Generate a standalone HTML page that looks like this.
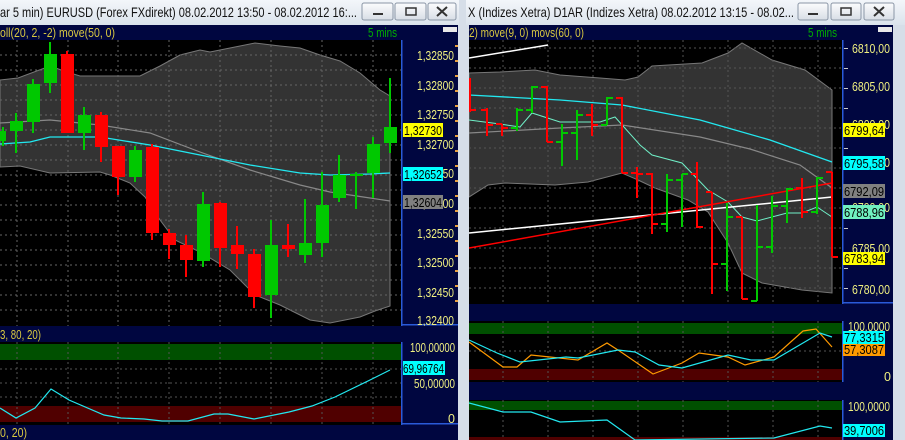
<!DOCTYPE html>
<html><head><meta charset="utf-8"><style>
html,body{margin:0;padding:0;background:#d6dee8;width:905px;height:440px;overflow:hidden}
svg{display:block}
text{font-family:"Liberation Sans",sans-serif}
</style></head><body>
<svg width="905" height="440" viewBox="0 0 905 440" xmlns="http://www.w3.org/2000/svg">
<defs>
<linearGradient id="tb" x1="0" y1="0" x2="0" y2="1"><stop offset="0" stop-color="#f3f6fa"/><stop offset="1" stop-color="#dbe3ec"/></linearGradient>
<linearGradient id="bt" x1="0" y1="0" x2="0" y2="1"><stop offset="0" stop-color="#fbfcfd"/><stop offset="1" stop-color="#d8dee6"/></linearGradient>
<clipPath id="cl"><rect x="0" y="40" width="401" height="286"/></clipPath>
<clipPath id="cr"><rect x="469" y="40" width="373" height="264"/></clipPath>
<clipPath id="il"><rect x="0" y="342" width="401" height="83"/></clipPath>
<clipPath id="ir1"><rect x="469" y="321" width="373" height="61"/></clipPath>
<clipPath id="ir2"><rect x="469" y="400" width="373" height="40"/></clipPath>
</defs>
<rect width="905" height="440" fill="#d6dee8"/>

<!-- ===== LEFT WINDOW ===== -->
<rect x="0" y="0" width="459" height="25" fill="url(#tb)"/>
<text x="0" y="17" font-size="14" fill="#111" textLength="357" lengthAdjust="spacingAndGlyphs">ar 5 min)  EURUSD (Forex FXdirekt) 08.02.2012 13:50 - 08.02.2012 16:...</text>
<rect x="362" y="3" width="31" height="17" rx="2" fill="url(#bt)" stroke="#8a96a6"/>
<rect x="395" y="3" width="31" height="17" rx="2" fill="url(#bt)" stroke="#8a96a6"/>
<rect x="428" y="3" width="28" height="17" rx="2" fill="url(#bt)" stroke="#8a96a6"/>
<rect x="373" y="13" width="10" height="2" fill="#333"/>
<rect x="406" y="8" width="10" height="7" fill="none" stroke="#333" stroke-width="1.5"/>
<path d="M437 7 L447 16 M447 7 L437 16" stroke="#333" stroke-width="2"/>
<rect x="0" y="25" width="458" height="15" fill="#000640"/>
<text x="0" y="37" font-size="12.5" fill="#d8c840" textLength="115" lengthAdjust="spacingAndGlyphs">oll(20, 2, -2) move(50, 0)</text>
<text x="368" y="37" font-size="12.5" fill="#00b000" textLength="29" lengthAdjust="spacingAndGlyphs">5 mins</text>
<rect x="443" y="27" width="14" height="5" fill="#e8e8e8"/>

<rect x="0" y="40" width="401" height="286" fill="#000"/>
<g clip-path="url(#cl)">
<polygon fill="#333" stroke="#777" stroke-width="1" points="0,80 18,78 50,66 67,72 80,76 140,76 160,66 180,55 200,50 210,52 230,48 255,43 280,46 300,48 320,55 340,61 360,73 380,90 390,96 390,306 375,311 360,317 330,323 310,320 280,305 255,295 230,270 200,252 175,240 160,220 145,197 130,183 110,175 100,172 50,173 20,166 0,167"/>
<g stroke="#666" stroke-width="1" stroke-dasharray="2,3">
<path d="M17 40V326M68 40V326M118 40V326M169 40V326M220 40V326M271 40V326M322 40V326M373 40V326"/>
<path d="M0 55H401M0 70H401M0 85H401M0 100H401M0 115H401M0 130H401M0 145H401M0 160H401M0 175H401M0 190H401M0 205H401M0 220H401M0 235H401M0 250H401M0 265H401M0 280H401M0 295H401M0 310H401"/>
</g>
<polyline fill="none" stroke="#888" stroke-width="1.2" points="0,123 50,120 100,125 150,133 200,152 250,170 300,185 330,192 370,198 390,201"/>
<polyline fill="none" stroke="#22e8f0" stroke-width="1.3" points="0,144 30,142 50,137 100,137 150,145 200,155 250,165 300,173 330,175 370,174 390,173"/>
<g stroke-width="2">
<path stroke="#00c800" d="M3 127V146M16 113V153M33 79V133M50 42V93M84 107V150M135 146V182M203 192V267M271 220V318M305 199V263M322 172V257M339 155V202M356 172V209M373 137V198M390 78V153"/>
<path stroke="#f00" d="M67 51V133M101 112V162M118 146V195M152 144V240M169 229V259M186 235V277M220 202V267M237 226V269M254 249V308M288 224V257"/>
</g>
<g fill="#00c800">
<rect x="-4" y="131" width="10" height="10"/><rect x="10" y="121" width="13" height="10"/><rect x="27" y="84" width="13" height="38"/><rect x="44" y="54" width="13" height="29"/><rect x="78" y="115" width="13" height="18"/><rect x="129" y="150" width="13" height="27"/><rect x="197" y="204" width="13" height="57"/><rect x="265" y="245" width="13" height="50"/><rect x="299" y="243" width="13" height="12"/><rect x="316" y="205" width="13" height="38"/><rect x="333" y="175" width="13" height="23"/><rect x="350" y="174" width="13" height="2"/><rect x="367" y="144" width="13" height="29"/><rect x="384" y="127" width="13" height="16"/>
</g>
<g fill="#f00">
<rect x="61" y="54" width="13" height="79"/><rect x="95" y="115" width="13" height="32"/><rect x="112" y="146" width="13" height="31"/><rect x="146" y="147" width="13" height="86"/><rect x="163" y="233" width="13" height="12"/><rect x="180" y="245" width="13" height="15"/><rect x="214" y="203" width="13" height="45"/><rect x="231" y="245" width="13" height="9"/><rect x="248" y="254" width="13" height="43"/><rect x="282" y="245" width="13" height="4"/>
</g>
</g>
<!-- left axis -->
<rect x="401" y="40" width="57" height="286" fill="#000640"/>
<rect x="401" y="40" width="1.5" height="286" fill="#2a5ad8"/>
<rect x="401" y="324" width="57" height="1.5" fill="#2a5ad8"/>
<g fill="#e8a040"><rect x="455" y="45" width="3" height="2"/><rect x="455" y="60" width="3" height="2"/><rect x="455" y="75" width="3" height="2"/><rect x="455" y="90" width="3" height="2"/><rect x="455" y="105" width="3" height="2"/><rect x="455" y="120" width="3" height="2"/><rect x="455" y="135" width="3" height="2"/><rect x="455" y="150" width="3" height="2"/><rect x="455" y="165" width="3" height="2"/><rect x="455" y="180" width="3" height="2"/><rect x="455" y="195" width="3" height="2"/><rect x="455" y="210" width="3" height="2"/><rect x="455" y="225" width="3" height="2"/><rect x="455" y="240" width="3" height="2"/><rect x="455" y="255" width="3" height="2"/><rect x="455" y="270" width="3" height="2"/><rect x="455" y="285" width="3" height="2"/><rect x="455" y="300" width="3" height="2"/></g>
<g font-size="12.5" fill="#f0f080">
<text x="417" y="60" textLength="37" lengthAdjust="spacingAndGlyphs">1,32850</text><text x="417" y="90" textLength="37" lengthAdjust="spacingAndGlyphs">1,32800</text><text x="417" y="119" textLength="37" lengthAdjust="spacingAndGlyphs">1,32750</text><text x="417" y="149" textLength="37" lengthAdjust="spacingAndGlyphs">1,32700</text><text x="417" y="178" textLength="37" lengthAdjust="spacingAndGlyphs">1,32650</text><text x="417" y="208" textLength="37" lengthAdjust="spacingAndGlyphs">1,32600</text><text x="417" y="238" textLength="37" lengthAdjust="spacingAndGlyphs">1,32550</text><text x="417" y="267" textLength="37" lengthAdjust="spacingAndGlyphs">1,32500</text><text x="417" y="297" textLength="37" lengthAdjust="spacingAndGlyphs">1,32450</text><text x="417" y="325" textLength="37" lengthAdjust="spacingAndGlyphs">1,32400</text>
</g>
<g font-size="12.5" fill="#000">
<rect x="403" y="123" width="40" height="14" fill="#ffff00"/><text x="404" y="135" textLength="38" lengthAdjust="spacingAndGlyphs">1,32730</text>
<rect x="403" y="167" width="40" height="14" fill="#00ffff"/><text x="404" y="179" textLength="38" lengthAdjust="spacingAndGlyphs">1,32652</text>
<rect x="403" y="195" width="40" height="14" fill="#808080"/><text x="404" y="207" textLength="38" lengthAdjust="spacingAndGlyphs">1,32604</text>
</g>

<rect x="0" y="326" width="458" height="16" fill="#000640"/>
<text x="0" y="339" font-size="12.5" fill="#d8c840" textLength="41" lengthAdjust="spacingAndGlyphs">3, 80, 20)</text>
<rect x="0" y="342" width="401" height="83" fill="#000"/>
<g clip-path="url(#il)">
<rect x="0" y="344" width="401" height="16" fill="#005000"/>
<rect x="0" y="406" width="401" height="16" fill="#500000"/>
<g stroke="#555" stroke-width="1" stroke-dasharray="2,3"><path d="M17 342V425M68 342V425M118 342V425M169 342V425M220 342V425M271 342V425M322 342V425M373 342V425M0 369H401M0 383H401M0 397H401"/></g>
<polyline fill="none" stroke="#22e8f0" stroke-width="1.2" points="0,408 16,418 35,408 51,389 69,400 104,415 121,418 144,419 162,421 188,421 214,414 228,414 254,419 289,412 312,406 335,397 370,380 390,370"/>
</g>
<rect x="401" y="342" width="57" height="83" fill="#000640"/>
<rect x="401" y="342" width="1.5" height="83" fill="#2a5ad8"/>
<rect x="401" y="423" width="57" height="1.5" fill="#2a5ad8"/>
<g font-size="12.5" fill="#f0f080"><text x="410" y="352" textLength="45" lengthAdjust="spacingAndGlyphs">100,00000</text><text x="414" y="388" textLength="41" lengthAdjust="spacingAndGlyphs">50,00000</text><text x="448" y="423">0</text></g>
<rect x="403" y="361" width="42" height="14" fill="#00ffff"/><text x="403" y="373" font-size="12.5" fill="#000" textLength="41" lengthAdjust="spacingAndGlyphs">69,96764</text>
<rect x="0" y="425" width="458" height="15" fill="#000640"/>
<text x="0" y="437" font-size="12.5" fill="#d8c840" textLength="27" lengthAdjust="spacingAndGlyphs">0, 20)</text>

<!-- ===== RIGHT WINDOW ===== -->
<rect x="466" y="0" width="439" height="25" fill="url(#tb)"/>
<text x="468" y="17" font-size="14" fill="#111" textLength="326" lengthAdjust="spacingAndGlyphs">X (Indizes Xetra) D1AR (Indizes Xetra) 08.02.2012 13:15 - 08.02...</text>
<rect x="798" y="3" width="30" height="17" rx="2" fill="url(#bt)" stroke="#8a96a6"/>
<rect x="831" y="3" width="30" height="17" rx="2" fill="url(#bt)" stroke="#8a96a6"/>
<rect x="864" y="3" width="30" height="17" rx="2" fill="url(#bt)" stroke="#8a96a6"/>
<rect x="808" y="13" width="10" height="2" fill="#333"/>
<rect x="841" y="8" width="10" height="7" fill="none" stroke="#333" stroke-width="1.5"/>
<path d="M874 7 L884 16 M884 7 L874 16" stroke="#333" stroke-width="2"/>
<rect x="469" y="25" width="424" height="15" fill="#000640"/>
<text x="469" y="37" font-size="12.5" fill="#d8c840" textLength="115" lengthAdjust="spacingAndGlyphs">2) move(9, 0) movs(60, 0)</text>
<text x="808" y="37" font-size="12.5" fill="#00b000" textLength="29" lengthAdjust="spacingAndGlyphs">5 mins</text>
<rect x="878" y="27" width="14" height="5" fill="#e8e8e8"/>

<rect x="469" y="40" width="373" height="264" fill="#000"/>
<g clip-path="url(#cr)">
<polygon fill="#333" stroke="#777" stroke-width="1" points="469,73 500,72 535,70 560,75 600,78 625,80 638,77 652,66 702,63 728,53 742,43 772,60 805,70 832,90 832,293 802,290 762,283 742,273 728,243 708,212 688,200 655,188 638,180 622,173 588,182 555,185 505,183 488,185 469,197"/>
<g stroke="#555" stroke-width="1" stroke-dasharray="2,3">
<path d="M503 40V304M548 40V304M593 40V304M638 40V304M683 40V304M728 40V304M773 40V304M818 40V304"/>
<path d="M469 48H842M469 68H842M469 88H842M469 108H842M469 128H842M469 148H842M469 168H842M469 188H842M469 208H842M469 228H842M469 248H842M469 268H842M469 288H842"/>
</g>
<polyline fill="none" stroke="#888" stroke-width="1.2" points="469,133 560,128 622,125 700,137 750,149 800,165 832,188"/>
<polyline fill="none" stroke="#22e8f0" stroke-width="1.3" points="469,95 560,100 622,105 700,120 770,140 832,162"/>
<polyline fill="none" stroke="#70f0c8" stroke-width="1" points="469,120 500,124 520,127 532,113 560,122 600,122 615,117 640,145 652,155 682,163 708,190 728,202 742,217 757,221 787,213 802,213 817,207 832,217"/>
<path d="M469 58 L548 45" stroke="#fff" stroke-width="1.5"/>
<path d="M469 233 L832 197" stroke="#fff" stroke-width="1.5"/>
<path d="M469 248 L832 183" stroke="#f00" stroke-width="1.5"/>
<g stroke-width="2" fill="none">
<path stroke="#f00" d="M470 78V112M470 110H476 M487 108V136M481 110H487M487 125H493 M502 124V136M496 124H502M502 128H508 M547 86V142M541 87H547M547 142H553 M592 104V136M586 115H592M592 125H598 M622 97V173M616 98H622M622 173H628 M637 167V198M631 173H637M637 174H643 M652 173V234M646 174H652M652 224H658 M697 162V228M691 174H697M697 227H703 M712 192V294M706 192H712M712 264H718 M742 217V299M736 217H742M742 299H748 M802 178V218M796 188H802M802 212H808 M832 172V257M826 172H832M832 257H838"/>
<path stroke="#00c800" d="M517 108V131M511 128H517M517 110H523 M532 86V113M526 110H532M532 87H538 M562 124V166M556 142H562M562 133H568 M577 110V160M571 133H577M577 115H583 M607 97V125M601 125H607M607 98H613 M667 174V232M661 224H667M667 180H673 M682 174V227M676 180H682M682 174H688 M727 203V291M721 264H727M727 217H733 M757 205V301M751 301H757M757 247H763 M772 196V253M766 247H772M772 206H778 M787 188V223M781 206H787M787 189H793 M817 177V214M811 212H817M817 178H823"/>
</g>
</g>
<rect x="842" y="40" width="51" height="264" fill="#000640"/>
<rect x="842" y="40" width="1.5" height="264" fill="#2a5ad8"/>
<rect x="842" y="302" width="51" height="1.5" fill="#2a5ad8"/>
<g fill="#ccc"><rect x="844" y="48" width="4" height="1"/><rect x="844" y="68" width="4" height="1"/><rect x="844" y="88" width="4" height="1"/><rect x="844" y="108" width="4" height="1"/><rect x="844" y="148" width="4" height="1"/><rect x="844" y="188" width="4" height="1"/><rect x="844" y="228" width="4" height="1"/><rect x="844" y="268" width="4" height="1"/><rect x="844" y="288" width="4" height="1"/></g>
<g font-size="12.5" fill="#f0f080">
<text x="852" y="53" textLength="38" lengthAdjust="spacingAndGlyphs">6810,00</text><text x="852" y="91" textLength="38" lengthAdjust="spacingAndGlyphs">6805,00</text><text x="852" y="129" textLength="38" lengthAdjust="spacingAndGlyphs">6800,00</text><text x="852" y="167" textLength="38" lengthAdjust="spacingAndGlyphs">6795,00</text><text x="852" y="212" textLength="38" lengthAdjust="spacingAndGlyphs">6790,00</text><text x="852" y="253" textLength="38" lengthAdjust="spacingAndGlyphs">6785,00</text><text x="852" y="294" textLength="38" lengthAdjust="spacingAndGlyphs">6780,00</text>
</g>
<g font-size="12.5" fill="#000">
<rect x="843" y="123" width="42" height="14" fill="#ffff00"/><text x="844" y="135" textLength="40" lengthAdjust="spacingAndGlyphs">6799,64</text>
<rect x="843" y="156" width="42" height="14" fill="#00ffff"/><text x="844" y="168" textLength="40" lengthAdjust="spacingAndGlyphs">6795,58</text>
<rect x="843" y="184" width="42" height="14" fill="#808080"/><text x="844" y="196" textLength="40" lengthAdjust="spacingAndGlyphs">6792,09</text>
<rect x="843" y="205" width="42" height="14" fill="#70f0c0"/><text x="844" y="217" textLength="40" lengthAdjust="spacingAndGlyphs">6788,96</text>
<rect x="843" y="252" width="42" height="13" fill="#ffff00"/><text x="844" y="263" textLength="40" lengthAdjust="spacingAndGlyphs">6783,94</text>
</g>

<rect x="469" y="304" width="424" height="17" fill="#000640"/>
<rect x="469" y="321" width="373" height="61" fill="#000"/>
<g clip-path="url(#ir1)">
<rect x="469" y="323" width="373" height="11" fill="#005000"/>
<rect x="469" y="369" width="373" height="11" fill="#500000"/>
<g stroke="#555" stroke-width="1" stroke-dasharray="2,3"><path d="M503 321V382M548 321V382M593 321V382M638 321V382M683 321V382M728 321V382M773 321V382M818 321V382M469 351H842"/></g>
<polyline fill="none" stroke="#ff9a00" stroke-width="1.2" points="469,342 503,367 517,367 531,355 578,360 607,343 621,352 653,374 682,363 699,353 728,357 745,365 774,357 803,331 816,329 832,347"/>
<polyline fill="none" stroke="#22e8f0" stroke-width="1.2" points="469,340 497,353 520,362 566,357 578,358 618,350 635,352 659,365 682,368 728,355 751,360 774,360 820,333 832,337"/>
</g>
<rect x="842" y="321" width="51" height="61" fill="#000640"/>
<rect x="842" y="321" width="1.5" height="61" fill="#2a5ad8"/>
<g font-size="12.5" fill="#f0f080"><text x="848" y="331" textLength="42" lengthAdjust="spacingAndGlyphs">100,0000</text><text x="884" y="381">0</text></g>
<g font-size="12.5" fill="#000">
<rect x="843" y="343" width="42" height="13" fill="#ff9a00"/><text x="844" y="354" textLength="40" lengthAdjust="spacingAndGlyphs">57,3087</text>
<rect x="843" y="331" width="42" height="13" fill="#00ffff"/><text x="844" y="342" textLength="40" lengthAdjust="spacingAndGlyphs">77,3315</text>
</g>
<rect x="469" y="382" width="424" height="18" fill="#000640"/>
<rect x="469" y="400" width="373" height="40" fill="#000"/>
<g clip-path="url(#ir2)">
<rect x="469" y="401" width="373" height="9" fill="#005000"/>
<rect x="469" y="437" width="373" height="3" fill="#500000"/>
<g stroke="#555" stroke-width="1" stroke-dasharray="2,3"><path d="M503 400V440M548 400V440M593 400V440M638 400V440M683 400V440M728 400V440M773 400V440M818 400V440"/></g>
<polyline fill="none" stroke="#22e8f0" stroke-width="1.2" points="469,403 503,412 531,412 560,422 607,420 635,440 774,438 820,426 832,428"/>
</g>
<rect x="842" y="400" width="51" height="40" fill="#000640"/>
<rect x="842" y="400" width="1.5" height="40" fill="#2a5ad8"/>
<text x="848" y="411" font-size="12.5" fill="#f0f080" textLength="42" lengthAdjust="spacingAndGlyphs">100,0000</text>
<rect x="843" y="424" width="42" height="13" fill="#00ffff"/><text x="844" y="435" font-size="12.5" fill="#000" textLength="40" lengthAdjust="spacingAndGlyphs">39,7006</text>
</svg>
</body></html>
